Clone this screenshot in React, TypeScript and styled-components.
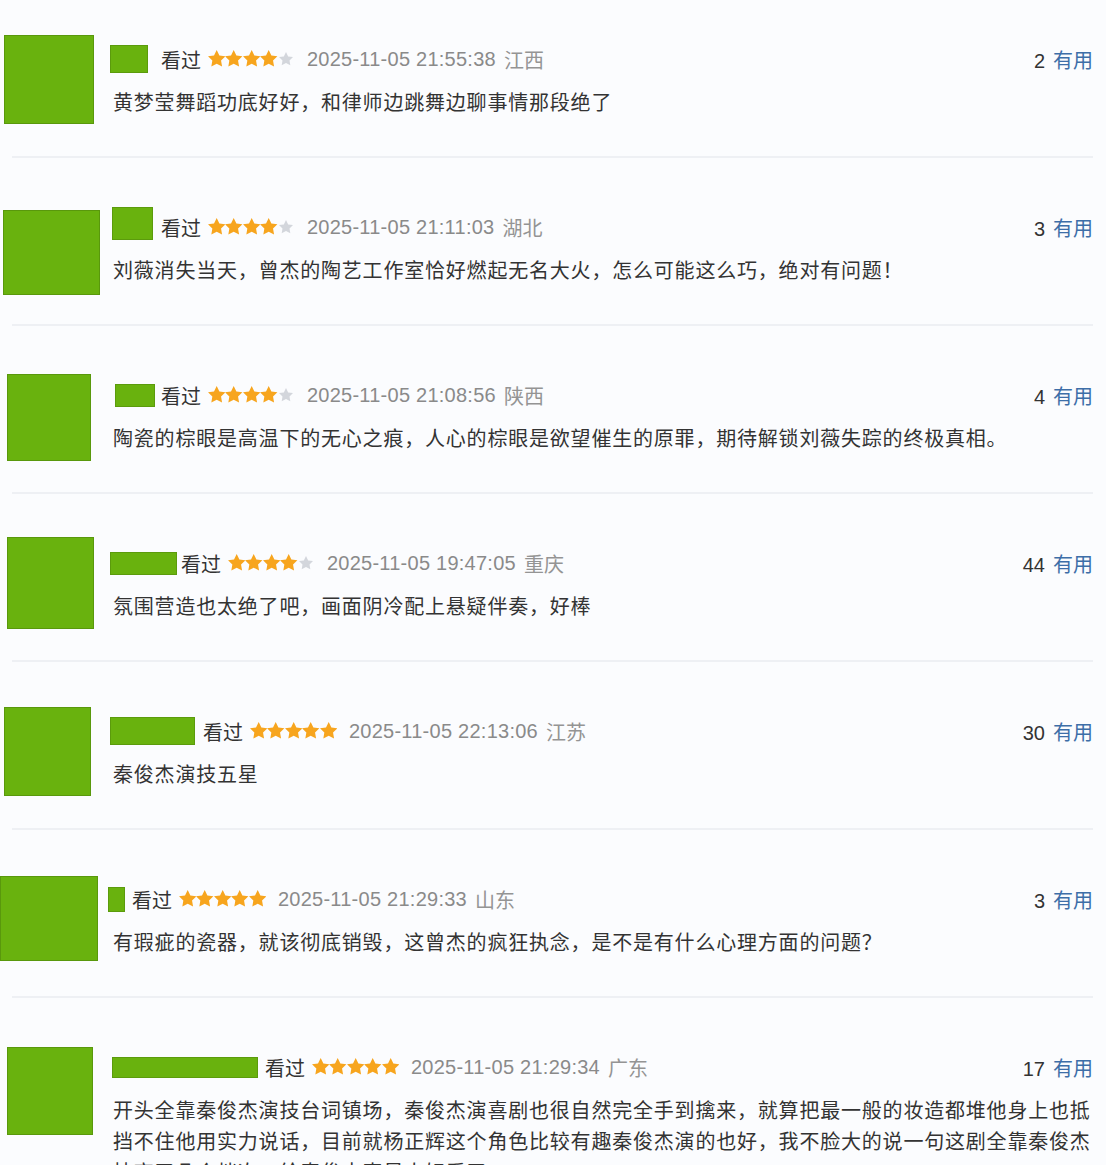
import React from 'react'
import styled, { createGlobalStyle } from 'styled-components'

const GlobalStyle = createGlobalStyle`
  html, body {
    margin: 0;
    padding: 0;
    background: #fbfcfe;
  }
  body {
    font-family: "Noto Sans CJK SC", sans-serif;
  }
`

const Page = styled.div`
  width: 1106px;
  height: 1165px;
  padding-right: 13px;
  box-sizing: border-box;
  background: #fbfcfe;
  overflow: hidden;
`

const Item = styled.div<{ $first?: boolean }>`
  display: grid;
  grid-template-columns: 110px 1fr;
  align-items: start;
  box-sizing: border-box;
  height: ${({ $first }) => ($first ? 156 : 166)}px;
  padding-top: ${({ $first }) => ($first ? 32 : 42)}px;
`

const Avatar = styled.div<{ $w: number; $h: number; $x: number; $y: number }>`
  width: ${({ $w }) => $w}px;
  height: ${({ $h }) => $h}px;
  margin-left: ${({ $x }) => $x}px;
  margin-top: ${({ $y }) => $y}px;
  background: #69b20e;
  box-shadow: inset 0 0 0 1px rgba(70, 120, 10, 0.45);
`

const Body = styled.div`
  min-width: 0;
  padding-top: 12px;
`

const Header = styled.div`
  display: flex;
  align-items: center;
  height: 30px;
  font-size: 20px;
  white-space: nowrap;
`

const NameBox = styled.div<{ $w: number; $h: number; $x: number; $gap: number; $lift: number }>`
  flex: none;
  width: ${({ $w }) => $w}px;
  height: ${({ $h }) => $h}px;
  margin-left: ${({ $x }) => $x}px;
  margin-right: ${({ $gap }) => $gap}px;
  margin-bottom: ${({ $lift }) => $lift}px;
  background: #69b20e;
  box-shadow: inset 0 0 0 1px rgba(70, 120, 10, 0.4);
`

const Seen = styled.span`
  color: #333;
  margin-right: 7px;
`

const Stars = styled.span`
  display: flex;
  align-items: center;
  margin-right: 12px;
`

const StarIcon = styled.svg<{ $on: boolean }>`
  flex: none;
  width: ${({ $on }) => ($on ? 17.4 : 14)}px;
  height: ${({ $on }) => ($on ? 17.4 : 14)}px;
  margin: 0 ${({ $on }) => ($on ? 0 : 1.7)}px;
  fill: ${({ $on }) => ($on ? '#f7a51e' : '#d3d6dc')};
`

const DateText = styled.span`
  font-family: "Liberation Sans", "Noto Sans CJK SC", sans-serif;
  letter-spacing: 0.25px;
  color: #8a8a8a;
`

const Place = styled.span`
  margin-left: 8px;
  color: #949494;
`

const Votes = styled.span`
  margin-left: auto;
  color: #333;
  font-family: "Liberation Sans", "Noto Sans CJK SC", sans-serif;
`

const Useful = styled.span`
  margin-left: 8px;
  color: #3d6ea8;
  font-family: "Noto Sans CJK SC", sans-serif;
`

const Comment = styled.p`
  margin: 12px 0 0;
  padding-left: 3px;
  font-size: 20px;
  letter-spacing: 0.8px;
  line-height: 31px;
  color: #333;
`

const Divider = styled.div`
  height: 2px;
  margin-left: 12px;
  background: #eef0f4;
`

const STAR = 'M12 2l3.09 6.26L22 9.27l-5 4.87 1.18 6.88L12 17.77l-6.18 3.25L7 14.14 2 9.27l6.91-1.01L12 2z'

type Review = {
  avatar: { w: number; h: number; x: number; y: number }
  name: { w: number; h: number; x: number; gap: number; lift?: number }
  stars: number
  time: string
  place: string
  votes: number
  text: string
}

const reviews: Review[] = [
  {
    avatar: { w: 90, h: 89, x: 4, y: 3 },
    name: { w: 38, h: 28, x: 0, gap: 13 },
    stars: 4,
    time: '2025-11-05 21:55:38',
    place: '江西',
    votes: 2,
    text: '黄梦莹舞蹈功底好好，和律师边跳舞边聊事情那段绝了',
  },
  {
    avatar: { w: 97, h: 85, x: 3, y: 10 },
    name: { w: 41, h: 33, x: 2, gap: 8, lift: 7 },
    stars: 4,
    time: '2025-11-05 21:11:03',
    place: '湖北',
    votes: 3,
    text: '刘薇消失当天，曾杰的陶艺工作室恰好燃起无名大火，怎么可能这么巧，绝对有问题！',
  },
  {
    avatar: { w: 84, h: 87, x: 7, y: 6 },
    name: { w: 40, h: 23, x: 5, gap: 6 },
    stars: 4,
    time: '2025-11-05 21:08:56',
    place: '陕西',
    votes: 4,
    text: '陶瓷的棕眼是高温下的无心之痕，人心的棕眼是欲望催生的原罪，期待解锁刘薇失踪的终极真相。',
  },
  {
    avatar: { w: 87, h: 92, x: 7, y: 1 },
    name: { w: 67, h: 23, x: 0, gap: 4 },
    stars: 4,
    time: '2025-11-05 19:47:05',
    place: '重庆',
    votes: 44,
    text: '氛围营造也太绝了吧，画面阴冷配上悬疑伴奏，好棒',
  },
  {
    avatar: { w: 87, h: 89, x: 4, y: 3 },
    name: { w: 85, h: 28, x: 0, gap: 8 },
    stars: 5,
    time: '2025-11-05 22:13:06',
    place: '江苏',
    votes: 30,
    text: '秦俊杰演技五星',
  },
  {
    avatar: { w: 98, h: 85, x: 0, y: 4 },
    name: { w: 17, h: 25, x: -2, gap: 7 },
    stars: 5,
    time: '2025-11-05 21:29:33',
    place: '山东',
    votes: 3,
    text: '有瑕疵的瓷器，就该彻底销毁，这曾杰的疯狂执念，是不是有什么心理方面的问题？',
  },
  {
    avatar: { w: 86, h: 88, x: 7, y: 7 },
    name: { w: 146, h: 21, x: 2, gap: 7 },
    stars: 5,
    time: '2025-11-05 21:29:34',
    place: '广东',
    votes: 17,
    text:
      '开头全靠秦俊杰演技台词镇场，秦俊杰演喜剧也很自然完全手到擒来，就算把最一般的妆造都堆他身上也抵挡不住他用实力说话，目前就杨正辉这个角色比较有趣秦俊杰演的也好，我不脸大的说一句这剧全靠秦俊杰技高了几个档次，给秦俊杰真是太好看了。',
  },
]

const Rating = ({ value }: { value: number }) => (
  <Stars>
    {[0, 1, 2, 3, 4].map((i) => (
      <StarIcon key={i} $on={i < value} viewBox="2 2 20 20">
        <path d={STAR} />
      </StarIcon>
    ))}
  </Stars>
)

const App = () => {
  return (
    <Page>
      <GlobalStyle />
      {reviews.map((r, idx) => (
        <React.Fragment key={r.time}>
          {idx > 0 && <Divider />}
          <Item $first={idx === 0}>
            <Avatar $w={r.avatar.w} $h={r.avatar.h} $x={r.avatar.x} $y={r.avatar.y} />
            <Body>
              <Header>
                <NameBox
                  $w={r.name.w}
                  $h={r.name.h}
                  $x={r.name.x}
                  $gap={r.name.gap}
                  $lift={r.name.lift ?? 0}
                />
                <Seen>看过</Seen>
                <Rating value={r.stars} />
                <DateText>{r.time}</DateText>
                <Place>{r.place}</Place>
                <Votes>
                  {r.votes}
                  <Useful>有用</Useful>
                </Votes>
              </Header>
              <Comment>{r.text}</Comment>
            </Body>
          </Item>
        </React.Fragment>
      ))}
    </Page>
  )
}

export default App
